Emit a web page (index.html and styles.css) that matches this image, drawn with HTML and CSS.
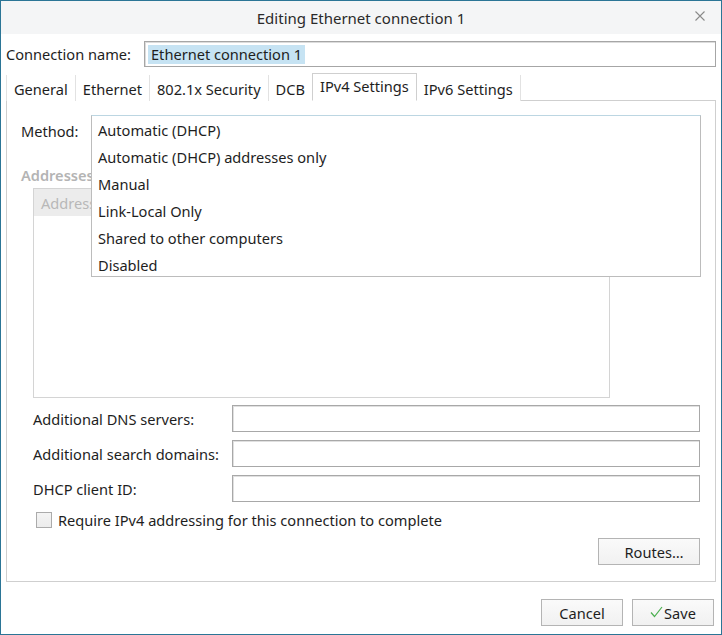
FILE: index.html
```html
<!DOCTYPE html>
<html>
<head>
<meta charset="utf-8">
<link rel="stylesheet" href="styles.css">
</head>
<body>
<div class="window">
  <div class="titlebar">
    <span class="title">Editing Ethernet connection 1</span>
    <svg class="close" width="10" height="10" viewBox="0 0 10 10"><path d="M0.5 0.5 L9.5 9.5 M9.5 0.5 L0.5 9.5" stroke="#8a8a8a" stroke-width="1.1" fill="none"/></svg>
  </div>
  <div class="content">
    <div class="name-row">
      <label class="name-label">Connection name:</label>
      <div class="name-input"><span class="sel">Ethernet connection 1</span></div>
    </div>
    <div class="tabs">
      <div class="tab">General</div>
      <div class="tab">Ethernet</div>
      <div class="tab">802.1x Security</div>
      <div class="tab">DCB</div>
      <div class="tab active">IPv4 Settings</div>
      <div class="tab">IPv6 Settings</div>
    </div>
    <div class="panel">
      <div class="method-row">
        <span class="method-label">Method:</span>
      </div>
      <div class="addr-label">Addresses</div>
      <div class="addr-table">
        <div class="addr-head">Address</div>
      </div>
      <div class="form">
        <label>Additional DNS servers:</label><div class="field"></div>
        <label>Additional search domains:</label><div class="field"></div>
        <label>DHCP client ID:</label><div class="field"></div>
      </div>
      <div class="check-row">
        <span class="checkbox"></span>
        <span>Require IPv4 addressing for this connection to complete</span>
      </div>
      <div class="routes-row">
        <button class="btn routes">Routes…</button>
      </div>
      <div class="popup">
        <div class="item">Automatic (DHCP)</div>
        <div class="item">Automatic (DHCP) addresses only</div>
        <div class="item">Manual</div>
        <div class="item">Link-Local Only</div>
        <div class="item">Shared to other computers</div>
        <div class="item">Disabled</div>
      </div>
    </div>
    <div class="footer">
      <button class="btn cancel">Cancel</button>
      <button class="btn save"><svg width="13" height="12" viewBox="0 0 13 12"><path d="M1 6.5 L4.5 10.5 L12 1" stroke="#4caf50" stroke-width="1.2" fill="none"/></svg>Save</button>
    </div>
  </div>
</div>
</body>
</html>
```
FILE: styles.css
```css
* { box-sizing: border-box; }
html, body { margin: 0; padding: 0; background: #ffffff; }
body {
  font-family: "Noto Sans", "Open Sans", sans-serif;
  font-size: 14.6px;
  color: #1e1e1e;
}
.window {
  width: 722px;
  height: 635px;
  border: 1px solid #2b7596;
  background: #ffffff;
  display: flex;
  flex-direction: column;
}
.titlebar {
  height: 33px;
  background: #f4f5f6;
  display: flex;
  align-items: center;
  justify-content: center;
  position: relative;
  flex: none;
}
.title { font-size: 15px; color: #2a2a2a; }
.close { position: absolute; left: 694px; top: 10px; }
.content {
  flex: 1;
  padding: 7px 5px 0 5px;
  display: flex;
  flex-direction: column;
}
.name-row {
  display: flex;
  align-items: center;
  height: 26px;
}
.name-label { width: 138px; }
.name-input {
  flex: 1;
  height: 26px;
  border: 1px solid #a6a6a6;
  box-shadow: inset 1px 1px 0 #dcdcdc;
  display: flex;
  align-items: center;
  padding-left: 3px;
}
.sel { background: #c6e3f3; padding: 0 3px; line-height: 19px; }
.tabs {
  display: flex;
  margin-top: 7px;
  height: 27px;
  align-items: flex-end;
  border-bottom: 1px solid #cfcfcf;
}
.tab {
  height: 26px;
  padding: 1px 7px 0 7px;
  border-left: 1px solid #e2e2e2;
  display: flex;
  align-items: center;
  margin-bottom: -1px;
  background: #ffffff;
}
.tab:nth-child(6) { border-right: 1px solid #e2e2e2; }
.tab.active {
  height: 28px;
  border: 1px solid #cfcfcf;
  border-bottom: 1px solid #ffffff;
  padding-top: 0;
  padding-bottom: 2px;
}
.tab.active + .tab { border-left: none; }
.panel {
  position: relative;
  height: 481px;
  border: 1px solid #cfcfcf;
  border-top: none;
  padding: 0 14px 0 14px;
  display: flex;
  flex-direction: column;
}
.method-row { height: 60px; padding-top: 20px; }
.addr-label { color: #b4b4b4; font-weight: 600; height: 14px; line-height: 14px; margin-top: 7px; }
.addr-table {
  margin-left: 12px;
  width: 577px;
  height: 210px;
  margin-top: 6px;
  border: 1px solid #d4d4d4;
}
.addr-head {
  height: 27px;
  background: #ececec;
  color: #b8b8b8;
  padding-left: 7px;
  display: flex;
  align-items: center;
}
.form {
  margin-left: 12px;
  margin-top: 7px;
  display: grid;
  grid-template-columns: 199px 468px;
  row-gap: 8px;
  align-items: center;
}
.field {
  height: 27px;
  border: 1px solid #a8a8a8;
  box-shadow: inset 1px 1px 0 #e0e0e0;
}
.check-row {
  margin-left: 15px;
  margin-top: 9px;
  display: flex;
  align-items: center;
  gap: 6px;
  height: 18px;
}
.checkbox {
  width: 16px;
  height: 16px;
  border: 1px solid #ababab;
  background: linear-gradient(#f4f4f4, #ececec);
}
.routes-row {
  display: flex;
  justify-content: flex-end;
  margin-top: 9px;
  padding-right: 1px;
}
.btn {
  font-family: inherit;
  font-size: 14.6px;
  color: #1e1e1e;
  height: 27px;
  border: 1px solid #b4b4b4;
  background: linear-gradient(#fafafa, #f1f1f1);
  padding: 0;
  display: flex;
  align-items: center;
  justify-content: center;
}
.routes { width: 102px; padding-left: 10px; }
.popup {
  position: absolute;
  left: 84px;
  top: 14px;
  width: 610px;
  height: 162px;
  background: #ffffff;
  border: 1px solid #bcbcbc;
  border-top-color: #bcd6e2;
  padding-top: 1px;
}
.item {
  height: 27px;
  line-height: 27px;
  padding-left: 6px;
}
.footer {
  display: flex;
  justify-content: flex-end;
  gap: 9px;
  margin-top: 17px;
  padding-right: 2px;
}
.cancel { width: 82px; }
.save { width: 82px; gap: 1px; }
.save svg { margin-top: -1px; }
```
